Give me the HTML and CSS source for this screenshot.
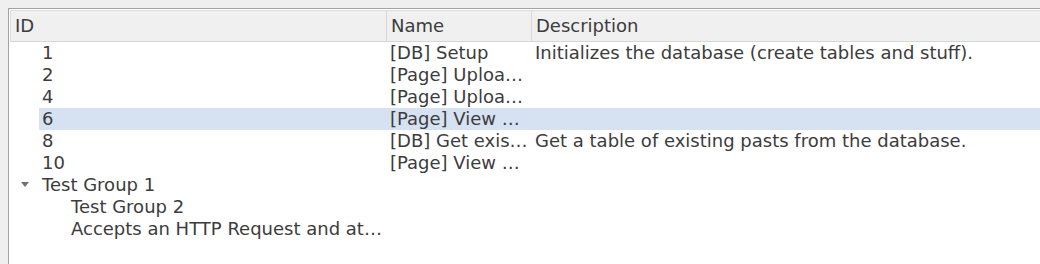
FILE: index.html
```html
<!DOCTYPE html>
<html lang="en">
<head>
  <meta charset="UTF-8" />
  <title>Tests</title>
  <link rel="stylesheet" href="styles.css">
</head>
<body>

  <!-- Tree view of tests -->
  <div class="frame">
    <div class="header">
      <div class="head-cell">ID</div>
      <div class="head-cell">Name</div>
      <div class="head-cell last">Description</div>
    </div>

    <div class="rows">
      <div class="row lvl1">
        <div class="branch"></div>
        <div class="item">
          <span>1</span><span>[DB] Setup</span><span>Initializes the database (create tables and stuff).</span>
        </div>
      </div>
      <div class="row lvl1">
        <div class="branch"></div>
        <div class="item">
          <span>2</span><span>[Page] Uploa…</span><span></span>
        </div>
      </div>
      <div class="row lvl1">
        <div class="branch"></div>
        <div class="item">
          <span>4</span><span>[Page] Uploa…</span><span></span>
        </div>
      </div>
      <div class="row lvl1">
        <div class="branch"></div>
        <div class="item selected">
          <span>6</span><span>[Page] View …</span><span></span>
        </div>
      </div>
      <div class="row lvl1">
        <div class="branch"></div>
        <div class="item">
          <span>8</span><span>[DB] Get exis…</span><span>Get a table of existing pasts from the database.</span>
        </div>
      </div>
      <div class="row lvl1">
        <div class="branch"></div>
        <div class="item">
          <span>10</span><span>[Page] View …</span><span></span>
        </div>
      </div>
      <div class="row lvl1">
        <div class="branch"><span class="arrow"></span></div>
        <div class="item">
          <span>Test Group 1</span><span></span><span></span>
        </div>
      </div>
      <div class="row lvl2">
        <div class="branch"></div>
        <div class="item">
          <span>Test Group 2</span><span></span><span></span>
        </div>
      </div>
      <div class="row lvl2">
        <div class="branch"></div>
        <div class="item">
          <span>Accepts an HTTP Request and at…</span><span></span><span></span>
        </div>
      </div>
    </div>
  </div>

</body>
</html>
```

FILE: styles.css
```css
body {
  margin: 0;
  background: #efefef;
  font-family: "DejaVu Sans", sans-serif;
  font-size: 18px;
  color: #3c3c3c;
  overflow: hidden;
}

.frame {
  margin: 8px 0 0 8px;
  height: 256px;
  border-top: 1px solid #a2a2a2;
  border-left: 1px solid #a2a2a2;
  padding: 1px 0 0 1px;
  background: #fff;
}

/* header */
.header {
  display: grid;
  grid-template-columns: 376px 145px 1fr;
  height: 30px;
  background: #f0f0f0;
  border-top: 1px solid #dcdcdc;
  border-left: 1px solid #dcdcdc;
  border-bottom: 1px solid #d6d6d6;
}

.head-cell {
  line-height: 30px;
  padding-left: 4px;
  border-right: 1px solid #d8d8d8;
  white-space: nowrap;
  overflow: hidden;
}

.head-cell.last {
  border-right: none;
}

/* rows */
.row {
  display: flex;
  height: 22px;
  --branch: 29px;
}

.row.lvl2 {
  --branch: 58px;
}

.branch {
  width: var(--branch);
  flex: none;
  display: flex;
  align-items: center;
  justify-content: center;
}

.arrow {
  width: 0;
  height: 0;
  border-left: 4.5px solid transparent;
  border-right: 4.5px solid transparent;
  border-top: 5px solid #707070;
  margin-top: -1px;
}

.item {
  flex: 1;
  display: grid;
  grid-template-columns: calc(377px - var(--branch)) 145px 1fr;
  line-height: 22px;
}

.item span {
  padding-left: 3px;
  white-space: nowrap;
  overflow: hidden;
}

.item.selected {
  background: #d6e2f2;
}
```
